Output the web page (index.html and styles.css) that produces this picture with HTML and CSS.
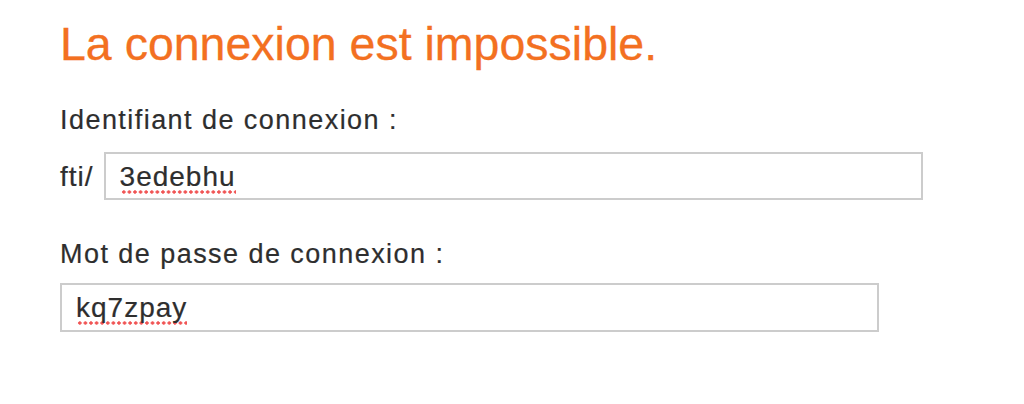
FILE: index.html
```html
<!DOCTYPE html>
<html lang="fr">
<head>
<meta charset="utf-8">
<title>La connexion est impossible.</title>
<link rel="stylesheet" href="styles.css">
</head>
<body>
<main class="panel">
  <h1 class="title">La connexion est impossible.</h1>
  <div class="group group-login">
    <label class="label">Identifiant de connexion :</label>
    <div class="row">
      <span class="prefix">fti/</span>
      <div class="field"><span class="value">3edebhu</span></div>
    </div>
  </div>
  <div class="group group-pass">
    <label class="label">Mot de passe de connexion :</label>
    <div class="field field-pass"><span class="value">kq7zpay</span></div>
  </div>
</main>
</body>
</html>
```
FILE: styles.css
```css
html, body {
  margin: 0;
  padding: 0;
  background: #ffffff;
}
body {
  font-family: "Liberation Sans", Arial, Helvetica, sans-serif;
  color: #2e2e2e;
}
.panel {
  padding: 18px 0 0 60px;
  display: flex;
  flex-direction: column;
}
.title {
  margin: 0;
  font-size: 46.5px;
  font-weight: normal;
  line-height: 53px;
  color: #f37021;
  letter-spacing: 0;
  -webkit-text-stroke: 0.3px #f37021;
}
.group {
  display: flex;
  flex-direction: column;
}
.group-login {
  margin-top: 33px;
  gap: 16px;
}
.group-pass {
  margin-top: 38px;
  gap: 13px;
}
.label {
  font-size: 27px;
  line-height: 32px;
  letter-spacing: 1.45px;
  -webkit-text-stroke: 0.2px #2e2e2e;
}
.row {
  display: flex;
  align-items: center;
  gap: 10px;
}
.prefix {
  font-size: 28px;
  letter-spacing: 1px;
  padding-top: 2px;
  -webkit-text-stroke: 0.2px #2e2e2e;
}
.field {
  box-sizing: border-box;
  width: 819px;
  height: 48px;
  border: 2px solid #cccccc;
  background: #ffffff;
  padding: 7px 14px 0;
  font-size: 28px;
  line-height: 32px;
  letter-spacing: 1px;
  color: #2e2e2e;
  -webkit-text-stroke: 0.2px #2e2e2e;
}
.field-pass {
  height: 49px;
}
.value {
  display: inline-block;
  background-image: radial-gradient(circle at center, #f05454 0, #f05454 1.4px, rgba(240, 84, 84, 0) 2px);
  background-size: 5.6px 6px;
  background-repeat: repeat-x;
  background-position: 1px calc(100% - 0px);
  line-height: 36px;
  margin-top: -2px;
}
```
